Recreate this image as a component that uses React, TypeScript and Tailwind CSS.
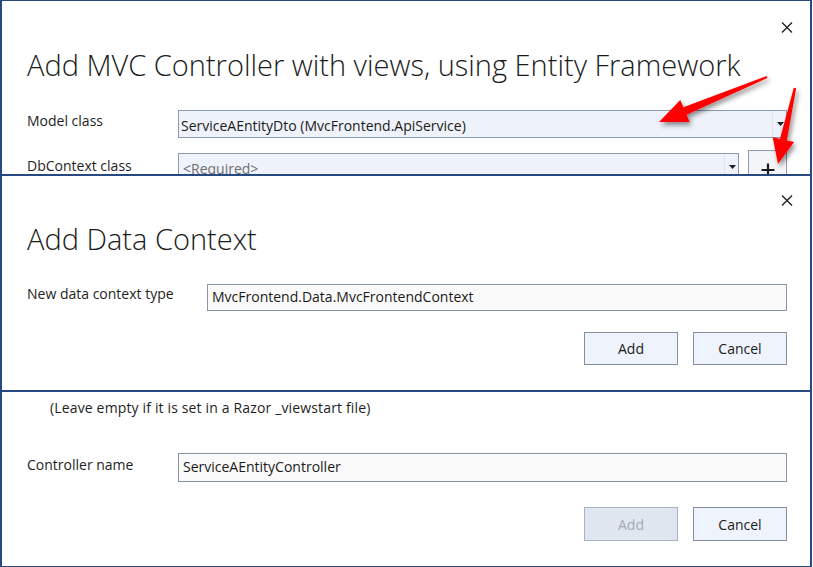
import React from 'react';

const font = { fontFamily: '"Open Sans", "Noto Sans", sans-serif' };

function CloseX() {
    return (
        <svg width="12" height="11" viewBox="0 0 12 11" className="block">
            <path d="M1 0.5 L11 10.5 M11 0.5 L1 10.5" stroke="#1e1e1e" strokeWidth="1.3" fill="none" />
        </svg>
    );
}

function Caret() {
    return (
        <svg width="7" height="4" viewBox="0 0 7 4" className="block">
            <path d="M0 0 H7 L3.5 4 Z" fill="#1e1e1e" />
        </svg>
    );
}

function Dropdown({ text, placeholder, className }: { text: string; placeholder?: boolean; className: string }) {
    return (
        <div className={`h-[28px] border border-[#8c9ab0] bg-[#eef2fa] flex items-stretch ${className}`}>
            <div className={`flex-1 pl-[2px] pt-[5px] text-[14px] leading-5 whitespace-nowrap overflow-hidden ${placeholder ? 'text-[#6e6e6e] pl-[4px]' : 'text-[#1b1b1b]'}`}>
                {text}
            </div>
            <div className="w-[14px] border-l border-[#dfe4ee] flex items-center justify-center pl-[1px]">
                <Caret />
            </div>
        </div>
    );
}

function Button({ label, disabled }: { label: string; disabled?: boolean }) {
    return (
        <button
            className={`w-[94px] h-full border text-[14px] ${disabled
                ? 'bg-[#dfe6f0] border-[#a9b3c3] text-[#a5abb4]'
                : 'bg-[#eff3fb] border-[#8591a3] text-[#1b1b1b]'}`}
        >
            {label}
        </button>
    );
}

export default function App() {
    return (
        <div className="w-[813px] h-[567px] bg-white relative overflow-hidden" style={font}>
            <div className="w-[812px] h-[567px] border-x-2 border-t border-b border-[#264a80] flex flex-col">
                {/* Add MVC Controller (top, clipped) */}
                <section className="h-[173px] overflow-hidden pt-[21px] pl-[25px] pr-[23px]">
                    <div className="flex justify-end h-[11px] -mr-[6px]">
                        <CloseX />
                    </div>
                    <h1 className="mt-[14px] text-[29px] leading-[36px] font-light text-[#1b1b1b] whitespace-nowrap">
                        Add MVC Controller with views, using Entity Framework
                    </h1>
                    <div className="mt-[27px] flex items-start">
                        <div className="w-[151px] mt-[1px] text-[14px] leading-5 text-[#1e1e1e]">Model class</div>
                        <Dropdown text="ServiceAEntityDto (MvcFrontend.ApiService)" className="flex-1" />
                    </div>
                    <div className="mt-[12px] flex items-start">
                        <div className="w-[151px] mt-[6px] text-[14px] leading-5 text-[#1e1e1e]">DbContext class</div>
                        <Dropdown text="<Required>" placeholder className="w-[561px] mt-[3px]" />
                        <div className="ml-[9px] w-[39px] h-[34px] border border-[#8c9ab0] bg-[#f3f5f9] flex justify-center pt-[12px]">
                            <svg width="14" height="14" viewBox="0 0 14 14" className="block">
                                <path d="M0.5 7 H13.5 M7 0.5 V13.5" stroke="#1b1b1b" strokeWidth="2.2" fill="none" />
                            </svg>
                        </div>
                    </div>
                </section>

                <div className="h-[2px] bg-[#264a80] shrink-0" />

                {/* Add Data Context */}
                <section className="h-[214px] shrink-0 pt-[19px] pl-[25px] pr-[23px]">
                    <div className="flex justify-end h-[11px] -mr-[6px]">
                        <CloseX />
                    </div>
                    <h2 className="mt-[15px] text-[29px] leading-[36px] font-light text-[#1b1b1b] whitespace-nowrap">
                        Add Data Context
                    </h2>
                    <div className="mt-[27px] flex items-start">
                        <div className="w-[180px] text-[14px] leading-5 text-[#1e1e1e]">New data context type</div>
                        <div className="flex-1 h-[27px] border border-[#8795a8] bg-[#fafafa] pl-[4px] pt-[2px] text-[14px] leading-5 text-[#1b1b1b]">
                            MvcFrontend.Data.MvcFrontendContext
                        </div>
                    </div>
                    <div className="mt-[21px] h-[33px] flex justify-end gap-[15px]">
                        <Button label="Add" />
                        <Button label="Cancel" />
                    </div>
                </section>

                <div className="h-[2px] bg-[#264a80] shrink-0" />

                {/* Add MVC Controller (bottom part) */}
                <section className="flex-1 pt-[6px] pl-[25px] pr-[23px]">
                    <div className="ml-[23px] text-[14px] leading-5 text-[#1e1e1e] tracking-[0.15px]">
                        (Leave empty if it is set in a Razor _viewstart file)
                    </div>
                    <div className="mt-[35px] flex items-start">
                        <div className="w-[151px] mt-[2px] text-[14px] leading-5 text-[#1e1e1e]">Controller name</div>
                        <div className="flex-1 h-[29px] border border-[#8795a8] bg-[#fafafa] pl-[4px] pt-[3px] text-[14px] leading-5 text-[#1b1b1b]">
                            ServiceAEntityController
                        </div>
                    </div>
                    <div className="mt-[25px] h-[34px] flex justify-end gap-[15px]">
                        <Button label="Add" disabled />
                        <Button label="Cancel" />
                    </div>
                </section>
            </div>

            {/* red annotation arrows */}
            <svg className="absolute inset-0 pointer-events-none" width="813" height="567" viewBox="0 0 813 567">
                <defs>
                    <filter id="shadow" x="-20%" y="-20%" width="140%" height="140%">
                        <feDropShadow dx="2" dy="3" stdDeviation="2.5" floodColor="#000" floodOpacity="0.45" />
                    </filter>
                </defs>
                <g filter="url(#shadow)" fill="#ff0606">
                    <polygon points="766.6,76.1 683.4,107.3 680.3,100 659,122 689.7,122 686.6,114.7 767.4,77.9" />
                    <polygon points="793.8,87.7 780,138.8 772.7,137.2 778,164 794.1,142 786.8,140.4 796.2,88.3" />
                </g>
            </svg>
        </div>
    );
}
